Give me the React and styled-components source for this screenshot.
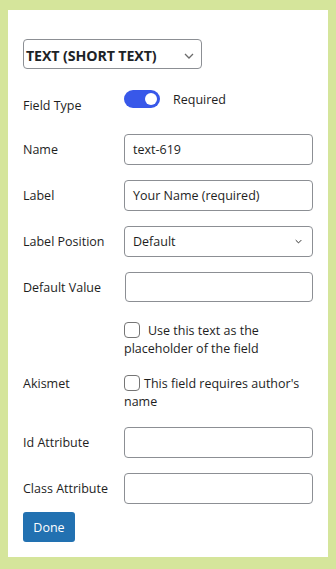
import styled, { createGlobalStyle } from 'styled-components';

const GlobalStyle = createGlobalStyle`
  html, body {
    margin: 0;
    background: #d5e59b;
  }
  body {
    padding: 10px 8px 12px;
    font-family: "Open Sans", "Noto Sans", sans-serif;
    color: #1e1e1e;
  }
  * { box-sizing: border-box; }
`;

const Panel = styled.div`
  background: #fff;
  padding: 29px 15px 15px;
  display: flex;
  flex-direction: column;
`;

const TypeSelect = styled.div`
  width: 179px;
  height: 30px;
  border: 1px solid #8c8f94;
  border-radius: 4px;
  display: flex;
  align-items: center;
  justify-content: space-between;
  padding: 3px 7px 0 2px;
  font-size: 14.2px;
  font-weight: 700;
  letter-spacing: -0.1px;
  color: #1d2327;
`;

const Row = styled.div`
  display: grid;
  grid-template-columns: 101px 189px;
  align-items: ${p => (p.$top ? 'start' : 'center')};
  margin-top: ${p => p.$mt || 0}px;
`;

const Label = styled.div`
  font-size: 12.5px;
  color: #1e1e1e;
  padding-top: ${p => p.$pt || 0}px;
`;

const Input = styled.div`
  height: ${p => p.$h || 31}px;
  border: 1px solid #8c8f94;
  border-radius: 4px;
  display: flex;
  align-items: center;
  justify-content: space-between;
  padding: 0 10px 0 8px;
  font-size: 12.5px;
  color: #1e1e1e;
  margin-left: ${p => p.$ml || 0}px;
`;

const ToggleWrap = styled.div`
  display: flex;
  align-items: center;
  gap: 13px;
  font-size: 12.5px;
  color: #1e1e1e;
`;

const Track = styled.div`
  width: 36px;
  height: 18px;
  border-radius: 9px;
  background: #3858e9;
  display: flex;
  align-items: center;
  justify-content: flex-end;
  padding-right: 3px;
`;

const Knob = styled.div`
  width: 12px;
  height: 12px;
  border-radius: 50%;
  background: #fff;
`;

const CheckText = styled.div`
  font-size: 12.5px;
  line-height: 18px;
  color: #1e1e1e;
`;

const Box = styled.span`
  display: inline-block;
  width: 16px;
  height: 16px;
  border: 1px solid #757575;
  border-radius: 4px;
  vertical-align: -3px;
  margin-right: ${p => p.$gap}px;
`;

const Button = styled.button`
  align-self: flex-start;
  width: 52px;
  height: 30px;
  margin-top: 8px;
  border: none;
  border-radius: 3px;
  background: #2271b1;
  color: #fff;
  font-family: inherit;
  font-size: 12.5px;
  padding: 0;
`;

const Chevron = ({ w = 10, h = 6, color = '#50575e' }) => (
  <svg width={w} height={h} viewBox="0 0 10 6" fill="none">
    <path d="M1 1l4 4 4-4" stroke={color} strokeWidth="1.3" />
  </svg>
);

export default function App() {
  return (
    <>
      <GlobalStyle />
      <Panel>
        <TypeSelect>
          <span>TEXT (SHORT TEXT)</span>
          <Chevron w={10} h={6} color="#6b6b6b" />
        </TypeSelect>

        <Row $mt={21} $top>
          <Label $pt={7}>Field Type</Label>
          <ToggleWrap>
            <Track><Knob /></Track>
            <span>Required</span>
          </ToggleWrap>
        </Row>

        <Row $mt={20}>
          <Label>Name</Label>
          <Input>text-619</Input>
        </Row>
        <Row $mt={15}>
          <Label>Label</Label>
          <Input>Your Name (required)</Input>
        </Row>
        <Row $mt={15}>
          <Label>Label Position</Label>
          <Input>
            <span>Default</span>
            <Chevron w={7} h={5} color="#1e1e1e" />
          </Input>
        </Row>
        <Row $mt={15}>
          <Label>Default Value</Label>
          <Input $h={30} $ml={1} />
        </Row>

        <Row $mt={20} $top>
          <span />
          <CheckText>
            <Box $gap={8} />
            Use this text as the placeholder of the field
          </CheckText>
        </Row>

        <Row $mt={17} $top>
          <Label $pt={0}>Akismet</Label>
          <CheckText>
            <Box $gap={4} />
            This field requires author's name
          </CheckText>
        </Row>

        <Row $mt={16}>
          <Label>Id Attribute</Label>
          <Input />
        </Row>
        <Row $mt={15}>
          <Label>Class Attribute</Label>
          <Input />
        </Row>

        <Button>Done</Button>
      </Panel>
    </>
  );
}
